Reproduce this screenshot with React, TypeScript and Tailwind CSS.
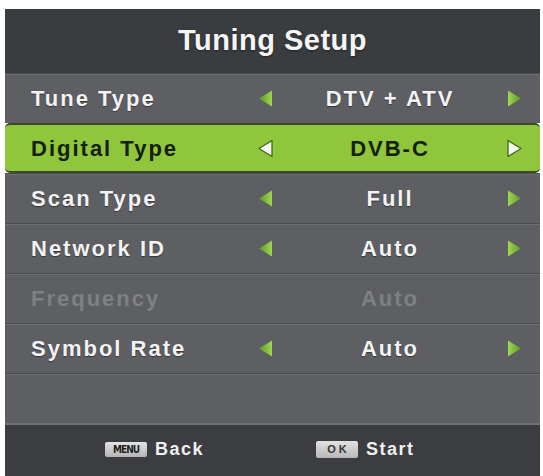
import React from 'react';

type Row = {
  label: string;
  value: string;
  active?: boolean;
  disabled?: boolean;
};

const rows: Row[] = [
  { label: 'Tune Type', value: 'DTV + ATV' },
  { label: 'Digital Type', value: 'DVB-C', active: true },
  { label: 'Scan Type', value: 'Full' },
  { label: 'Network ID', value: 'Auto' },
  { label: 'Frequency', value: 'Auto', disabled: true },
  { label: 'Symbol Rate', value: 'Auto' },
];

const Arrow = ({ dir, active }: { dir: 'left' | 'right'; active?: boolean }) => {
  const points = dir === 'left' ? '14,0.5 14,16.5 1,8.5' : '1,0.5 1,16.5 14,8.5';
  return (
    <svg width="15" height="17" viewBox="0 0 15 17" className="block">
      <defs>
        <linearGradient id={`g-${dir}`} x1="0" x2="1" y1="0" y2="0">
          <stop offset="0" stopColor={dir === 'left' ? '#5a9a2a' : '#a2d650'} />
          <stop offset="1" stopColor={dir === 'left' ? '#a2d650' : '#5a9a2a'} />
        </linearGradient>
      </defs>
      {active ? (
        <polygon points={points} fill="#f4f6ef" stroke="#3f6a1a" strokeWidth="1.3" strokeLinejoin="round" />
      ) : (
        <polygon points={points} fill={`url(#g-${dir})`} />
      )}
    </svg>
  );
};

const MenuRow = ({ row }: { row: Row }) => {
  const text = row.active
    ? 'text-[#14200a]'
    : row.disabled
    ? 'text-[#7e8084]'
    : 'text-[#f3f3f3] [text-shadow:0_1px_1px_rgba(0,0,0,0.45)]';

  return (
    <div
      className={`h-[50px] grid grid-cols-[227px_15px_1fr_15px] items-center pl-[26px] pr-[18px] text-[22px] font-bold tracking-[2px] ${text} ${
        row.active
          ? 'bg-[#8fc63c] rounded-[5px] border-y-2 border-[#3d4a2a]'
          : 'bg-[#5d5f63] border-t border-t-[#4a4c4f] shadow-[inset_0_1px_0_#6c6e72]'
      }`}
    >
      <span>{row.label}</span>
      <span>{!row.disabled && <Arrow dir="left" active={row.active} />}</span>
      <span className="text-center">{row.value}</span>
      <span>{!row.disabled && <Arrow dir="right" active={row.active} />}</span>
    </div>
  );
};

export default function App() {
  return (
    <div className="w-[543px] h-[476px] bg-white overflow-hidden font-['Liberation_Sans',Arial,sans-serif]">
      <div className="ml-[5px] mt-[9px] w-[535px] flex flex-col">
        {/* Header */}
        <div className="h-[64px] bg-[#3a3d40] flex items-center justify-center">
          <h1 className="text-[29px] font-bold text-[#f5f5f5] tracking-[0.5px] [text-shadow:0_1px_2px_rgba(0,0,0,0.5)]">
            Tuning Setup
          </h1>
        </div>

        {/* Rows */}
        {rows.map((row) => (
          <MenuRow key={row.label} row={row} />
        ))}
        <div className="h-[50px] bg-[#5d5f63] border-t border-t-[#4a4c4f] shadow-[inset_0_1px_0_#6c6e72]" />

        {/* Footer */}
        <div className="h-[53px] bg-[#3b3d40] border-t-2 border-t-[#6e7074] flex items-center pl-[100px] gap-[112px] pb-[2px]">
          <div className="flex items-center gap-[8px]">
            <span className="w-[42px] h-[15px] rounded-[2px] bg-gradient-to-b from-[#e4e4e4] to-[#b4b4b4] flex items-center justify-center text-[10px] font-bold text-[#222] tracking-[-1px] font-['DejaVu_Sans_Condensed','Liberation_Sans',sans-serif]">
              MENU
            </span>
            <span className="text-[18px] font-bold tracking-[1.5px] text-[#f0f0f0]">Back</span>
          </div>
          <div className="flex items-center gap-[8px]">
            <span className="w-[42px] h-[17px] rounded-[2px] bg-gradient-to-b from-[#e2e2e2] to-[#b8b8b8] flex items-center justify-center text-[11px] font-bold text-[#333] tracking-[3px] pl-[3px]">
              OK
            </span>
            <span className="text-[18px] font-bold tracking-[1.5px] text-[#f0f0f0]">Start</span>
          </div>
        </div>
      </div>
    </div>
  );
}
